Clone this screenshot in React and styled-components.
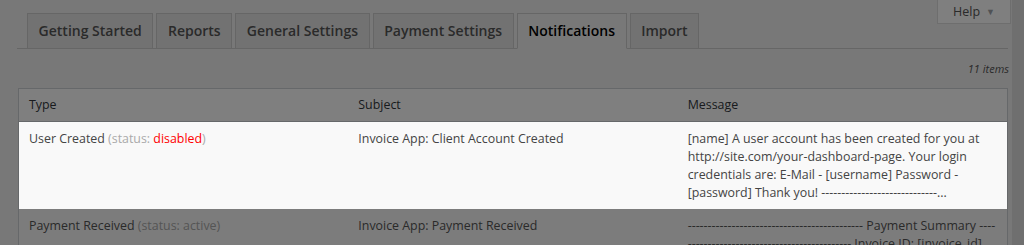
import React from 'react'
import styled, { createGlobalStyle } from 'styled-components'

const GlobalStyle = createGlobalStyle`
  html, body {
    margin: 0;
    padding: 0;
    background: #f1f1f1;
    font-family: "Open Sans", "Liberation Sans", sans-serif;
    font-size: 12.4px;
    color: #444;
    overflow: hidden;
  }
`

const Page = styled.div`
  display: flex;
  min-height: 245px;
`

const Main = styled.div`
  flex: 1;
  padding: 0 4px 0 18px;
`

const Gutter = styled.div`
  width: 12px;
  background: #dedede;
`

const Header = styled.div`
  display: grid;
  > * {
    grid-area: 1 / 1;
  }
`

const HelpButton = styled.div`
  justify-self: end;
  align-self: start;
  margin-right: -3px;
  height: 23px;
  line-height: 22px;
  padding: 0 15px 0 15px;
  background: #fff;
  border: 1px solid #ddd;
  border-top: 0;
  color: #555;
  font-size: 12.5px;
  display: flex;
  align-items: center;
  gap: 6px;
`

const Arrow = styled.span`
  color: #a0a5aa;
  font-size: 9px;
`

const TabBar = styled.div`
  display: flex;
  align-items: flex-end;
  gap: 3px;
  margin-left: -1px;
  padding: 13px 0 0 10px;
  border-bottom: 1px solid #ccc;
`

const Tab = styled.div`
  margin-bottom: -1px;
  padding: 5px 10.6px;
  line-height: 24px;
  font-size: 14px;
  font-weight: 600;
  border: 1px solid #ccc;
  border-bottom-color: ${ p => p.active ? '#f1f1f1' : '#ccc' };
  background: ${ p => p.active ? '#f1f1f1' : '#e5e5e5' };
  color: ${ p => p.active ? '#000' : '#555' };
  white-space: nowrap;
`

const Count = styled.div`
  margin: 11px -1px 10px 0;
  line-height: 18px;
  text-align: right;
  font-size: 11px;
  font-style: italic;
  color: #555;
`

const Table = styled.div`
  border: 1px solid #ccd0d4;
  background: #fff;
`

const Row = styled.div`
  display: grid;
  grid-template-columns: repeat(3, 1fr);
  background: ${ p => p.lit || p.alt ? '#f9f9f9' : '#fff' };
  ${ p => p.lit && 'position: relative; z-index: 20;' }
`

const HeadCell = styled.div`
  padding: 8px 10px;
  line-height: 16px;
  color: #32373c;
  border-bottom: 1px solid #ccd0d4;
`

const Cell = styled.div`
  padding: 8px 10px 7px;
  line-height: 18px;
  color: ${ p => p.lit ? '#444' : '#555' };
`

const Status = styled.span`
  color: #aaa;
`

const Off = styled.span`
  color: red;
`

const Overlay = styled.div`
  position: fixed;
  inset: 0;
  background: rgba(0, 0, 0, 0.5);
  z-index: 10;
`

const tabs = [ 'Getting Started', 'Reports', 'General Settings', 'Payment Settings', 'Notifications', 'Import' ]

const dash = n => '-'.repeat(n)

export default () => (
  <>
    <GlobalStyle />
    <Page>
      <Main>
        <Header>
          <TabBar>
            { tabs.map(t => <Tab key={ t } active={ t === 'Notifications' }>{ t }</Tab>) }
          </TabBar>
          <HelpButton>Help <Arrow>▼</Arrow></HelpButton>
        </Header>
        <Count>11 items</Count>
        <Table>
          <Row>
            <HeadCell>Type</HeadCell>
            <HeadCell>Subject</HeadCell>
            <HeadCell>Message</HeadCell>
          </Row>
          <Row lit>
            <Cell lit>User Created <Status>(status: <Off>disabled</Off>)</Status></Cell>
            <Cell lit>Invoice App: Client Account Created</Cell>
            <Cell lit>
              [name] A user account has been created for you at http://site.com/your-dashboard-page. Your login credentials are: E-Mail - [username] Password - [password] Thank you! { dash(29) }...
            </Cell>
          </Row>
          <Row alt>
            <Cell>Payment Received <Status>(status: active)</Status></Cell>
            <Cell>Invoice App: Payment Received</Cell>
            <Cell>
              { dash(44) } Payment Summary ----<br />
              { dash(41) } Invoice ID: [invoice_id]<br />
              { dash(41) } Total: [total]
            </Cell>
          </Row>
        </Table>
      </Main>
      <Gutter />
    </Page>
    <Overlay />
  </>
)
